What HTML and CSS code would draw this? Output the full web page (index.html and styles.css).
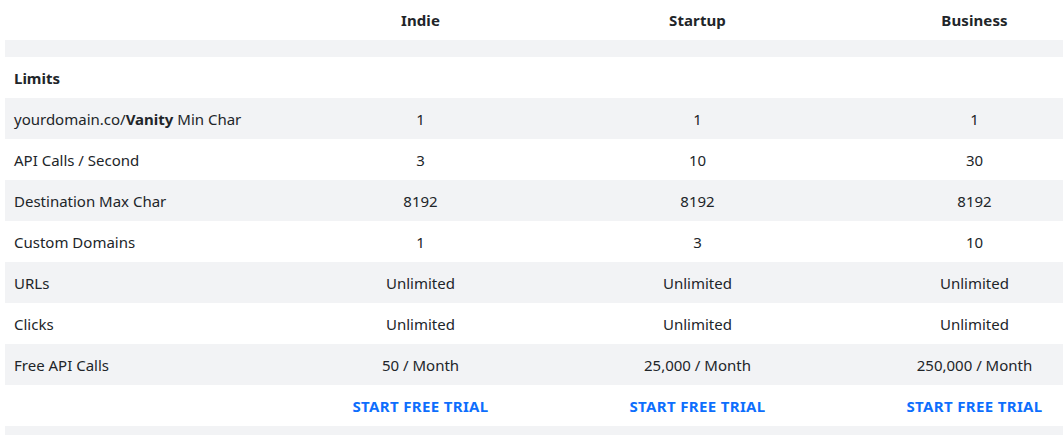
FILE: index.html
```html
<!DOCTYPE html>
<html>
<head>
<meta charset="utf-8">
<link rel="stylesheet" href="styles.css">
</head>
<body>
<div class="wrap">
<table class="plans">
  <thead>
    <tr class="head"><th></th><th>Indie</th><th>Startup</th><th>Business</th></tr>
  </thead>
  <tbody>
    <tr class="spacer gray"><td colspan="4"></td></tr>
    <tr class="section"><td>Limits</td><td></td><td></td><td></td></tr>
    <tr class="gray"><td>yourdomain.co/<b>Vanity</b> Min Char</td><td>1</td><td>1</td><td>1</td></tr>
    <tr><td>API Calls / Second</td><td>3</td><td>10</td><td>30</td></tr>
    <tr class="gray"><td>Destination Max Char</td><td>8192</td><td>8192</td><td>8192</td></tr>
    <tr><td>Custom Domains</td><td>1</td><td>3</td><td>10</td></tr>
    <tr class="gray"><td>URLs</td><td>Unlimited</td><td>Unlimited</td><td>Unlimited</td></tr>
    <tr><td>Clicks</td><td>Unlimited</td><td>Unlimited</td><td>Unlimited</td></tr>
    <tr class="gray"><td>Free API Calls</td><td>50 / Month</td><td>25,000 / Month</td><td>250,000 / Month</td></tr>
    <tr class="cta"><td></td><td><a href="#">START FREE TRIAL</a></td><td><a href="#">START FREE TRIAL</a></td><td><a href="#">START FREE TRIAL</a></td></tr>
    <tr class="spacer gray"><td colspan="4"></td></tr>
  </tbody>
</table>
</div>
</body>
</html>
```
FILE: styles.css
```css
html, body {
  margin: 0;
  padding: 0;
  background: #fff;
  overflow: hidden;
}
body {
  font-family: "Noto Sans", "Open Sans", sans-serif;
  font-size: 15px;
  color: #212529;
}
.wrap {
  padding-left: 5px;
  width: 1108px;
}
.plans {
  width: 1108px;
  table-layout: fixed;
  border-collapse: collapse;
}
.plans th, .plans td {
  height: 41px;
  padding: 0 9px;
  text-align: center;
  vertical-align: middle;
  line-height: 20px;
}
.plans th {
  height: 40px;
  font-weight: 700;
  letter-spacing: 0.1px;
}
.plans td:first-child {
  text-align: left;
}
.gray td {
  background: #f2f3f5;
}
.spacer td {
  height: 17px;
}
.section td {
  font-weight: 700;
}
.cta a {
  color: #0d6efd;
  font-weight: 700;
  text-decoration: none;
  letter-spacing: 0.35px;
}
```
